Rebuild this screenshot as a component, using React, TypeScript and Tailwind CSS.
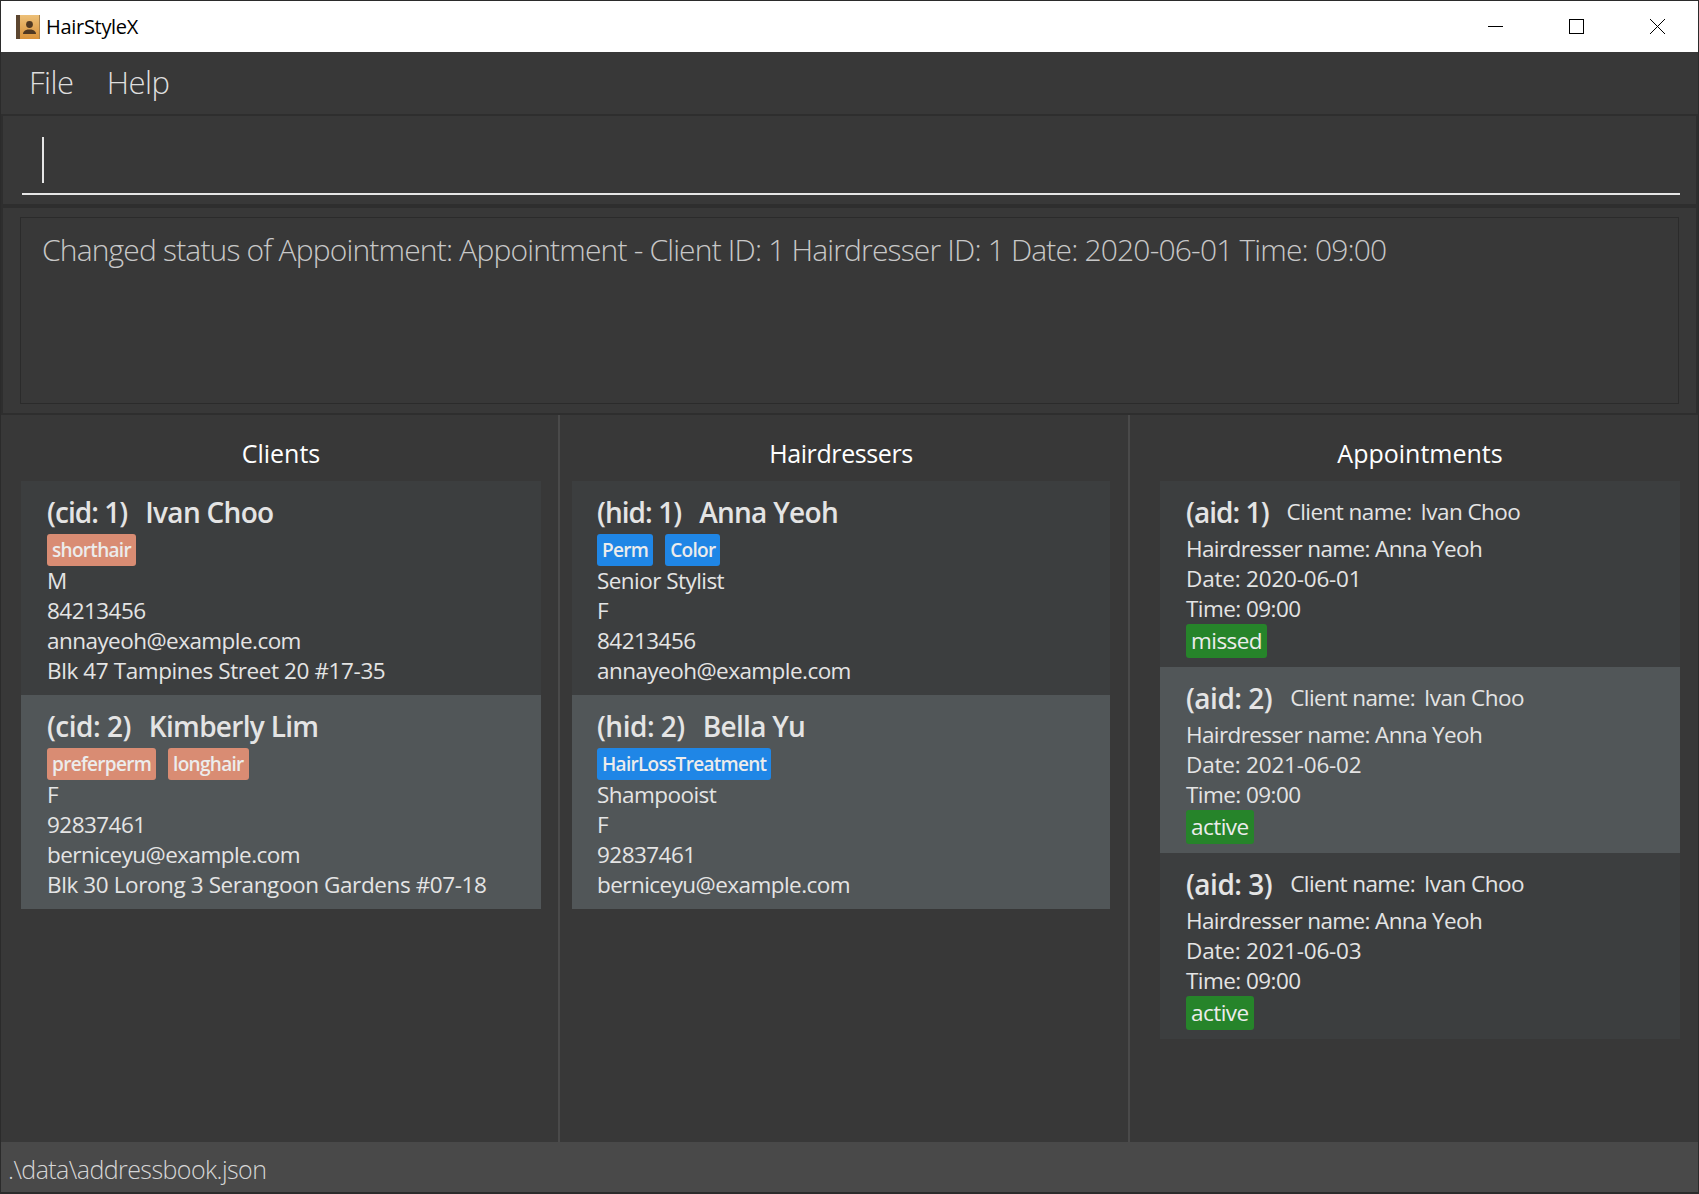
type Person = { id: string; name: string; tags: string[]; lines: string[]; selected?: boolean };

const clients: Person[] = [
  { id: "(cid: 1)", name: "Ivan Choo", tags: ["shorthair"], lines: ["M", "84213456", "annayeoh@example.com", "Blk 47 Tampines Street 20 #17-35"] },
  { id: "(cid: 2)", name: "Kimberly Lim", tags: ["preferperm", "longhair"], lines: ["F", "92837461", "berniceyu@example.com", "Blk 30 Lorong 3 Serangoon Gardens #07-18"], selected: true },
];

const hairdressers: Person[] = [
  { id: "(hid: 1)", name: "Anna Yeoh", tags: ["Perm", "Color"], lines: ["Senior Stylist", "F", "84213456", "annayeoh@example.com"] },
  { id: "(hid: 2)", name: "Bella Yu", tags: ["HairLossTreatment"], lines: ["Shampooist", "F", "92837461", "berniceyu@example.com"], selected: true },
];

const appointments = [
  { id: "(aid: 1)", date: "2020-06-01", status: "missed" },
  { id: "(aid: 2)", date: "2021-06-02", status: "active", selected: true },
  { id: "(aid: 3)", date: "2021-06-03", status: "active" },
];

// the "1" is narrower than the other digits in the original font
const idTracking = (id: string) => (id.includes("1") ? "tracking-[-0.95px]" : "tracking-[-0.5px]");

function AppIcon() {
  return (
    <svg width="26" height="26" viewBox="0 0 26 26" className="shrink-0">
      <defs>
        <linearGradient id="cover" x1="0" y1="0" x2="0" y2="1">
          <stop offset="0" stopColor="#edc078" />
          <stop offset="1" stopColor="#d8923a" />
        </linearGradient>
      </defs>
      <rect x="1" y="1" width="24" height="24" rx="1" fill="url(#cover)" />
      <rect x="1" y="1" width="4" height="24" fill="#5c4630" />
      <rect x="24" y="1" width="1" height="24" fill="#a8834f" />
      <circle cx="14.500" cy="10.500" r="3.400" fill="#4f3822" />
      <path d="M8 20c0-3 3-4 4.500-4.500h4c1.500 .5 4.500 1.500 4.500 4.500z" fill="#4f3822" />
    </svg>
  );
}

function WindowButtons() {
  return (
    <div className="ml-auto flex items-center gap-[66px] pr-[33px]">
      <svg width="15" height="15" viewBox="0 0 15 15" fill="none" stroke="black" strokeWidth="1">
        <path d="M0 7.500h15" />
      </svg>
      <svg width="15" height="15" viewBox="0 0 15 15" fill="none" stroke="black" strokeWidth="1">
        <rect x=".5" y=".5" width="14" height="14" />
      </svg>
      <svg width="15" height="15" viewBox="0 0 15 15" fill="none" stroke="black" strokeWidth="1">
        <path d="M0 0l15 15M15 0L0 15" />
      </svg>
    </div>
  );
}

function PersonCard({ person, tagClass, inset }: { person: Person; tagClass: string; inset: string }) {
  return (
    <div className={`pt-[10px] pb-[9px] ${inset} ${person.selected ? "bg-[#515658]" : "bg-[#3c3e3f]"}`}>
      <div className="h-[42px] text-[28px] leading-[42px] font-semibold text-[#e4e4e4]">
        <span className={idTracking(person.id)}>{person.id}</span>
        <span className="ml-[18px] tracking-[-0.7px]">{person.name}</span>
      </div>
      <div className="mt-px flex h-[32px] gap-[12px]">
        {person.tags.map((t) => (
          <span key={t} className={`rounded-[3px] px-[5px] text-[19px] leading-[32px] font-semibold text-[#ececec] tracking-[-0.7px] ${tagClass}`}>
            {t}
          </span>
        ))}
      </div>
      {person.lines.map((l) => (
        <div key={l} className={`h-[30px] text-[22.5px] leading-[30px] text-[#e4e4e4] ${l.startsWith("Blk") ? "tracking-[-0.4px]" : "tracking-[-0.55px]"}`}>
          {l}
        </div>
      ))}
    </div>
  );
}

function AppointmentCard({ a }: { a: (typeof appointments)[number] }) {
  return (
    <div className={`pt-[10px] pb-[9px] pl-[26px] ${a.selected ? "bg-[#515658]" : "bg-[#3c3e3f]"}`}>
      <div className="flex h-[42px] items-center text-[22.5px] text-[#e4e4e4] tracking-[-0.55px]">
        <span className={`text-[28px] font-semibold ${idTracking(a.id)}`}>{a.id}</span>
        <span className="ml-[18px]">Client name:</span>
        <span className="ml-[9px]">Ivan Choo</span>
      </div>
      <div className="mt-px text-[22.5px] leading-[30px] text-[#e4e4e4]">
        <div className="tracking-[-0.62px]">Hairdresser name: Anna Yeoh</div>
        <div className="tracking-[-0.2px]">Date: {a.date}</div>
        <div className="tracking-[-0.55px]">Time: 09:00</div>
      </div>
      <div className="flex h-[34px]">
        <span className="rounded-[3px] bg-[#26842a] px-[5px] text-[22.5px] leading-[34px] text-[#ececec] tracking-[-0.55px]">{a.status}</span>
      </div>
    </div>
  );
}

export default function App() {
  const heading = "h-[66px] text-center text-[25px] leading-[76px] font-medium text-white";
  return (
    <div className="flex h-screen w-full flex-col overflow-hidden border-t border-r border-l border-[#2b2b2b] bg-[#383838] font-['Open_Sans',sans-serif]">
      <div className="flex h-[51px] shrink-0 items-center bg-white pl-[14px] text-black">
        <AppIcon />
        <span className="ml-[5px] text-[20px] tracking-[-0.3px]">HairStyleX</span>
        <WindowButtons />
      </div>

      <div className="flex h-[64px] shrink-0 items-center gap-[33px] border-b-2 border-[#2e2e2e] pb-[2px] pl-[28px] text-[31px] font-light text-[#dedede] tracking-[-0.5px]">
        <span>File</span>
        <span>Help</span>
      </div>

      <div className="h-[90px] shrink-0 border-x-2 border-b-2 border-[#2e2e2e] pt-[21px] pr-[16px] pl-[19px]">
        <div className="ml-[20px] h-[46px] w-[2px] bg-[#e6e6e6]" />
        <div className="mt-[10px] h-[2px] bg-[#e6e6e6]" />
      </div>

      <div className="h-[209px] shrink-0 border-2 border-[#2e2e2e] px-[17px] py-[9px]">
        <div className="h-[187px] border border-[#2b2b2b] pt-[14px] pl-[21px] text-[30px] leading-[36px] font-light text-[#c8c8c8] tracking-[-0.83px]">
          Changed status of Appointment: Appointment - Client ID: 1 Hairdresser ID: 1 Date: 2020-06-01 Time: 09:00
        </div>
      </div>

      <div className="flex min-h-0 flex-1">
        <section className="w-[559px] shrink-0 border-r-2 border-[#4a4a4a] pr-[17px] pl-[20px]">
          <h2 className={heading}>Clients</h2>
          {clients.map((c) => (
            <PersonCard key={c.id} person={c} tagClass="bg-[#d98c73]" inset="pl-[26px]" />
          ))}
        </section>
        <section className="w-[570px] shrink-0 border-r-2 border-[#4a4a4a] pr-[18px] pl-[12px]">
          <h2 className={`${heading} tracking-[-0.4px]`}>Hairdressers</h2>
          {hairdressers.map((h) => (
            <PersonCard key={h.id} person={h} tagClass="bg-[#1f86e6]" inset="pl-[25px]" />
          ))}
        </section>
        <section className="flex-1 pr-[18px] pl-[30px]">
          <h2 className={heading}>Appointments</h2>
          {appointments.map((a) => (
            <AppointmentCard key={a.id} a={a} />
          ))}
        </section>
      </div>

      <div className="h-[52px] shrink-0 border-b-2 border-[#2b2b2b] bg-[#494949] pl-[7px] text-[25px] leading-[54px] font-light text-[#d6d6d6] tracking-[-0.57px]">
        .\data\addressbook.json
      </div>
    </div>
  );
}
